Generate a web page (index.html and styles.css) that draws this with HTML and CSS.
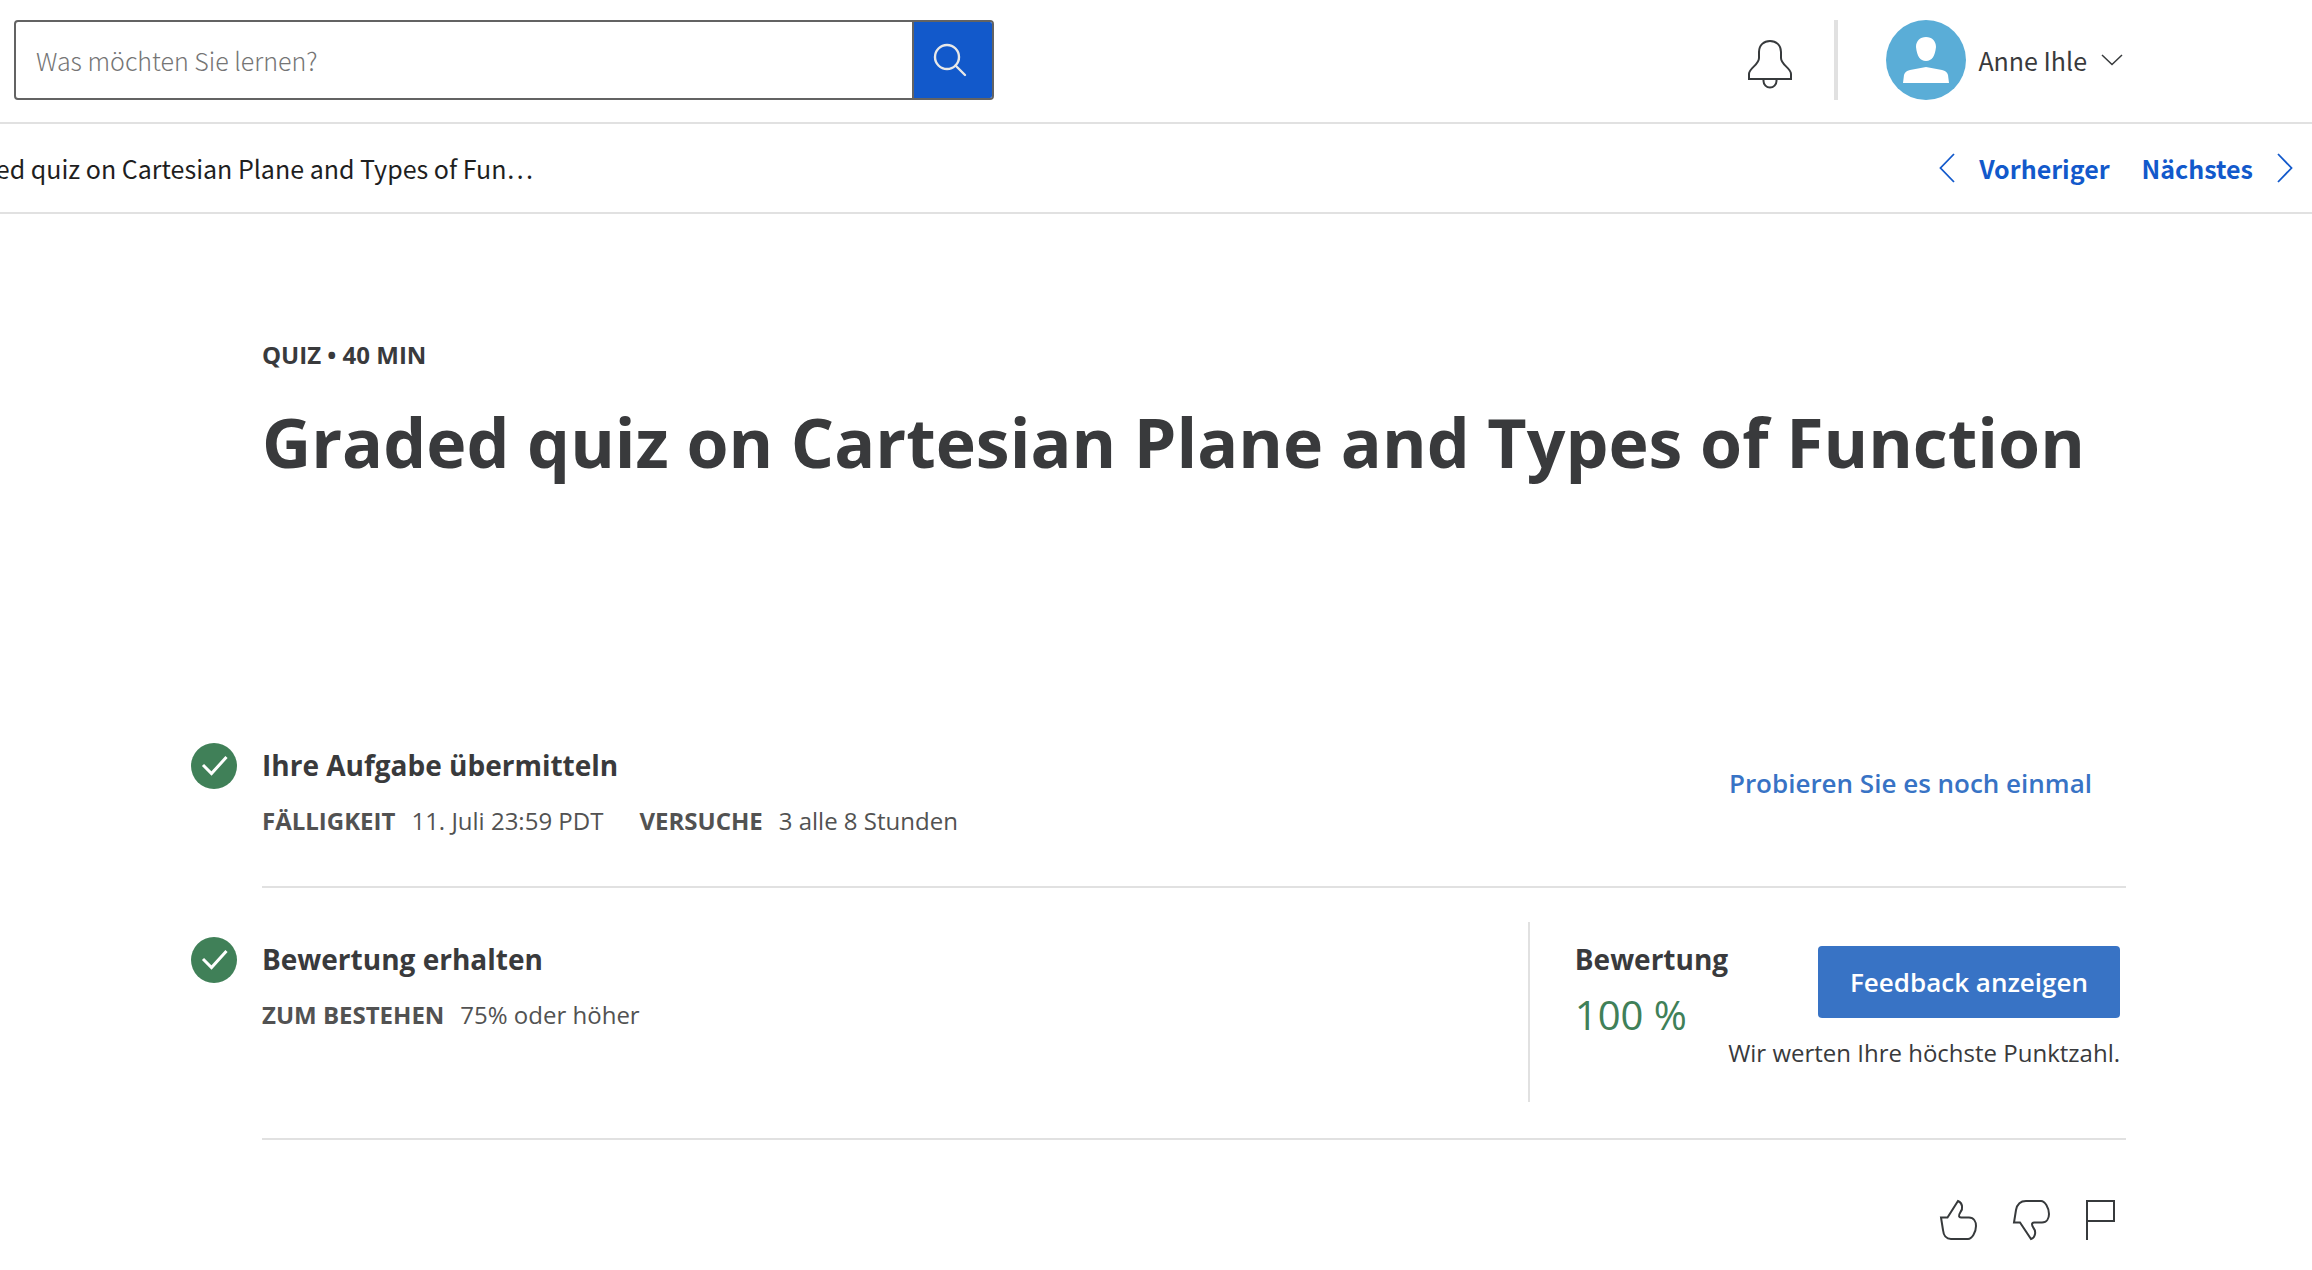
FILE: index.html
```html
<!DOCTYPE html>
<html lang="de">
<head>
<meta charset="utf-8">
<meta name="viewport" content="width=device-width, initial-scale=1">
<title>Graded quiz on Cartesian Plane and Types of Function</title>
<link rel="stylesheet" href="styles.css">
</head>
<body>
<header class="topbar">
  <form class="search" role="search">
    <input class="search-input" type="search" aria-label="Suche" placeholder="Was möchten Sie lernen?">
    <button class="search-button" type="button" aria-label="Suchen">
      <svg width="40" height="34" viewBox="0 0 40 34" fill="none" stroke="#e8e8e8" stroke-width="2.4" stroke-linecap="round"><circle cx="14" cy="14" r="12"/><path d="M22.500 22.500 32 32"/></svg>
    </button>
  </form>
  <div class="account">
    <button class="bell" type="button" aria-label="Benachrichtigungen">
      <svg width="46" height="50" viewBox="0 0 46 50" fill="none" stroke="#373a3c" stroke-width="2"><path d="M2 40V35C2 29 12 26 12 19V13C12 6 17 2 23 2S34 6 34 13V19C34 26 44 29 44 35V40Z"/><path d="M16.500 40V42A6.500 6.500 0 0 0 29.500 42V40"/></svg>
    </button>
    <button class="profile" type="button">
      <svg width="80" height="80" viewBox="0 0 80 80"><circle cx="40" cy="40" r="40" fill="#5aadd7"/><path fill="#fff" d="M40 17C46 17 50 21 50 27C49 36 46 41 40 41S31 36 30 27C30 21 34 17 40 17ZM17 63 18 55Q19 51 24 50L40 47 56 50Q61 51 62 55L63 63Z"/></svg>
      <span>Anne Ihle</span>
      <svg class="caret" width="22" height="12" viewBox="0 0 22 12" fill="none" stroke="#373a3c" stroke-width="1.500"><path d="M1 1 11 10.500 21 1"/></svg>
    </button>
  </div>
</header>
<nav class="crumbbar" aria-label="Kursnavigation">
  <div class="crumb">Graded quiz on Cartesian Plane and Types of Fun…</div>
  <div class="pager">
    <a href="#prev"><svg width="16" height="30" viewBox="0 0 16 30" fill="none" stroke="currentColor" stroke-width="1.800"><path d="M15 1 1.500 15 15 29"/></svg>Vorheriger</a>
    <a href="#next">Nächstes<svg width="16" height="30" viewBox="0 0 16 30" fill="none" stroke="currentColor" stroke-width="1.800"><path d="M1 1 14.500 15 1 29"/></svg></a>
  </div>
</nav>
<main class="content">
  <p class="kicker">QUIZ • 40 MIN</p>
  <h1>Graded quiz on Cartesian Plane and Types of Function</h1>
  <section class="step step-submit">
    <div class="step-main">
      <svg class="check" width="46" height="46" viewBox="0 0 46 46"><circle cx="23" cy="23" r="23" fill="#408058"/><path d="M12 22 20.500 30.500 35.500 14" fill="none" stroke="#fff" stroke-width="3"/></svg>
      <h2>Ihre Aufgabe übermitteln</h2>
      <dl><div><dt>FÄLLIGKEIT</dt><dd>11. Juli 23:59 PDT</dd></div><div><dt>VERSUCHE</dt><dd>3 alle 8 Stunden</dd></div></dl>
    </div>
    <button class="retry" type="button">Probieren Sie es noch einmal</button>
  </section>
  <section class="step step-grade">
    <div class="step-main">
      <svg class="check" width="46" height="46" viewBox="0 0 46 46"><circle cx="23" cy="23" r="23" fill="#408058"/><path d="M12 22 20.500 30.500 35.500 14" fill="none" stroke="#fff" stroke-width="3"/></svg>
      <h2>Bewertung erhalten</h2>
      <dl><div><dt>ZUM BESTEHEN</dt><dd>75% oder höher</dd></div></dl>
    </div>
    <div class="grade">
      <div class="score"><h2>Bewertung</h2><p>100 %</p></div>
      <div class="feedback"><button type="button">Feedback anzeigen</button><p>Wir werten Ihre höchste Punktzahl.</p></div>
    </div>
  </section>
  <div class="reactions">
    <button type="button" aria-label="Gefällt mir"><svg width="38" height="42" viewBox="0 0 38 42"><path d="M2 18.500H8.500L19 2C24 4 24 10 21.500 13C19 17 20 18.500 22 18.500H30C35 18.500 37 23 37 27C37 33 33 40 29 40H12C7 40 4.500 36 4 31Z"/></svg></button>
    <button type="button" aria-label="Gefällt mir nicht"><svg width="38" height="42" viewBox="0 0 38 42"><path d="M2 23.500H8L19 40C24 38 24 32 21.500 29C19 25 20 23.500 22 23.500H30C35 23.500 37 19 37 15C37 9 33 2 29 2H14C8 2 5 6 4 11Z"/></svg></button>
    <button type="button" aria-label="Melden"><svg width="30" height="42" viewBox="0 0 30 42"><path d="M2 41V2H29V22H2"/></svg></button>
  </div>
</main>
</body>
</html>
```
FILE: styles.css
```css
* { box-sizing: border-box; }
body, h1, h2, p, dl, dd { margin: 0; }
body {
  background: #fff;
  color: #393a3c;
  font-family: "Open Sans", sans-serif;
  font-size: 24px;
  line-height: 36px;
  overflow-x: hidden;
}
svg { display: block; flex: none; }
button { border: 0; padding: 0; background: none; color: inherit; font: inherit; cursor: pointer; }
.topbar, .crumbbar { display: flex; align-items: center; justify-content: space-between; border-bottom: 2px solid #e1e1e1; font-family: "Noto Sans CJK SC", sans-serif; font-size: 25px; }
.topbar { padding: 20px 187px 22px 14px; }
.search { display: flex; width: 980px; height: 80px; border: 2px solid #636363; border-radius: 4px; overflow: hidden; }
.search-input { flex: 1; min-width: 0; border: 0; padding: 0 20px; outline: 0; background: none; font: inherit; font-weight: 300; }
.search-input::placeholder { color: #757575; opacity: 1; }
.search-button { display: grid; place-items: center; width: 80px; border-left: 2px solid #636363; background: #1259cb; }
.account { display: flex; align-items: center; }
.bell { margin-right: 41px; padding-top: 8px; }
.profile { display: flex; align-items: center; gap: 12px; padding-left: 48px; border-left: 4px solid #e1e1e1; }
.caret { margin: 0 2px; }
.crumbbar { height: 90px; padding-right: 19px; color: #1f1f1f; }
.crumb { margin-left: -60px; white-space: nowrap; }
.pager { display: flex; gap: 32px; color: #1259cb; font-weight: 700; }
.pager a { display: flex; align-items: center; gap: 24px; color: inherit; text-decoration: none; }
.content { padding: 123px 186px 20px 262px; }
.kicker { font-weight: 700; }
h1 { margin-top: 23px; font-size: 68px; line-height: 92px; font-weight: 700; }
h2 { font-size: 28px; line-height: 40px; font-weight: 700; }
.step { display: flex; justify-content: space-between; border-bottom: 2px solid #e1e1e1; }
.step-submit { margin-top: 257px; padding-bottom: 47px; }
.step-main { position: relative; }
.check { position: absolute; left: -71px; top: -2px; }
dl { display: flex; gap: 36px; margin-top: 18px; color: #525252; }
dl div { display: flex; gap: 16px; }
dt { font-weight: 700; }
.retry { align-self: flex-start; margin: 20px 34px 0 0; color: #3873c5; font-size: 26px; font-weight: 600; }
.step-grade { padding: 34px 0 36px; }
.step-grade .step-main { margin-top: 17px; }
.grade { display: flex; min-height: 180px; padding: 17px 6px 0 45px; border-left: 2px solid #e1e1e1; }
.score p { margin-top: 8px; color: #408058; font-size: 40px; line-height: 56px; }
.feedback { display: flex; flex-direction: column; align-items: flex-end; gap: 17px; padding-top: 7px; }
.feedback button { padding: 18px 32px; border-radius: 4px; background: #3873c5; color: #fff; font-size: 26px; font-weight: 600; }
.reactions { display: flex; justify-content: flex-end; gap: 35px; padding: 59px 11px 0 0; }
.reactions svg { fill: none; stroke: #373a3c; stroke-width: 2; }
```
